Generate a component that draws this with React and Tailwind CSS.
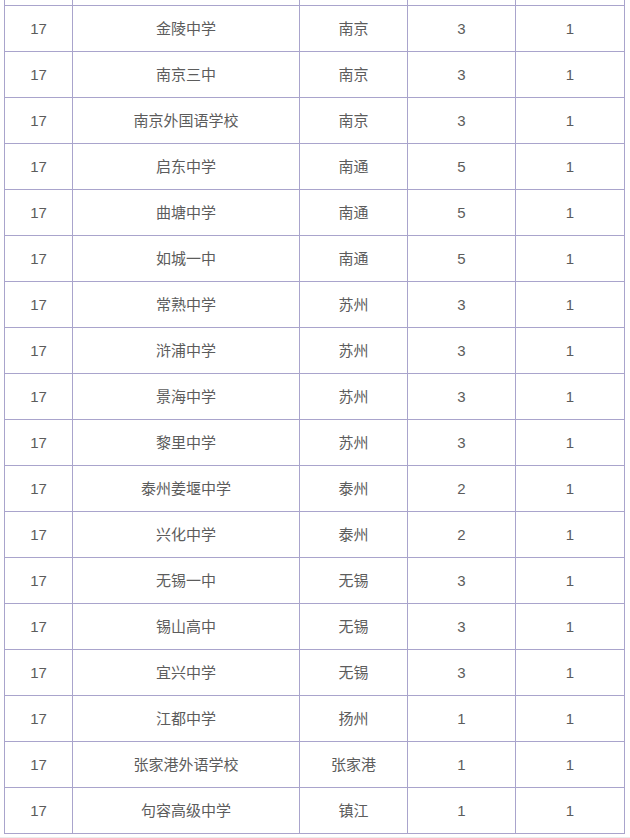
import React from 'react'

const rows = [
  ['金陵中学', '南京', 3, 1],
  ['南京三中', '南京', 3, 1],
  ['南京外国语学校', '南京', 3, 1],
  ['启东中学', '南通', 5, 1],
  ['曲塘中学', '南通', 5, 1],
  ['如城一中', '南通', 5, 1],
  ['常熟中学', '苏州', 3, 1],
  ['浒浦中学', '苏州', 3, 1],
  ['景海中学', '苏州', 3, 1],
  ['黎里中学', '苏州', 3, 1],
  ['泰州姜堰中学', '泰州', 2, 1],
  ['兴化中学', '泰州', 2, 1],
  ['无锡一中', '无锡', 3, 1],
  ['锡山高中', '无锡', 3, 1],
  ['宜兴中学', '无锡', 3, 1],
  ['江都中学', '扬州', 1, 1],
  ['张家港外语学校', '张家港', 1, 1],
  ['句容高级中学', '镇江', 1, 1],
]

const cell = 'border border-[#a9a4cc] text-center align-middle p-0 pt-[2px]'

export default function App() {
  return (
    <div
      className="w-[630px] h-[838px] overflow-hidden bg-white text-[#5c5c5c] text-[15px]"
      style={{ fontFamily: '"Liberation Sans", "Noto Sans CJK SC", sans-serif' }}
    >
      <table className="ml-[4px] -mt-[41px] w-[620px] border-collapse table-fixed">
        <colgroup>
          <col className="w-[68px]" />
          <col className="w-[227px]" />
          <col className="w-[108px]" />
          <col className="w-[108px]" />
          <col className="w-[109px]" />
        </colgroup>
        <tbody>
          <tr className="h-[46px]">
            <td className={cell}></td>
            <td className={cell}></td>
            <td className={cell}></td>
            <td className={cell}></td>
            <td className={cell}></td>
          </tr>
          {rows.map((r, i) => (
            <tr key={i} className="h-[46px]">
              <td className={cell}>17</td>
              <td className={cell}>{r[0]}</td>
              <td className={cell}>{r[1]}</td>
              <td className={cell}>{r[2]}</td>
              <td className={cell}>{r[3]}</td>
            </tr>
          ))}
        </tbody>
      </table>
      <div className="mt-[3px] h-[3px] bg-[#ececec]" />
    </div>
  )
}
